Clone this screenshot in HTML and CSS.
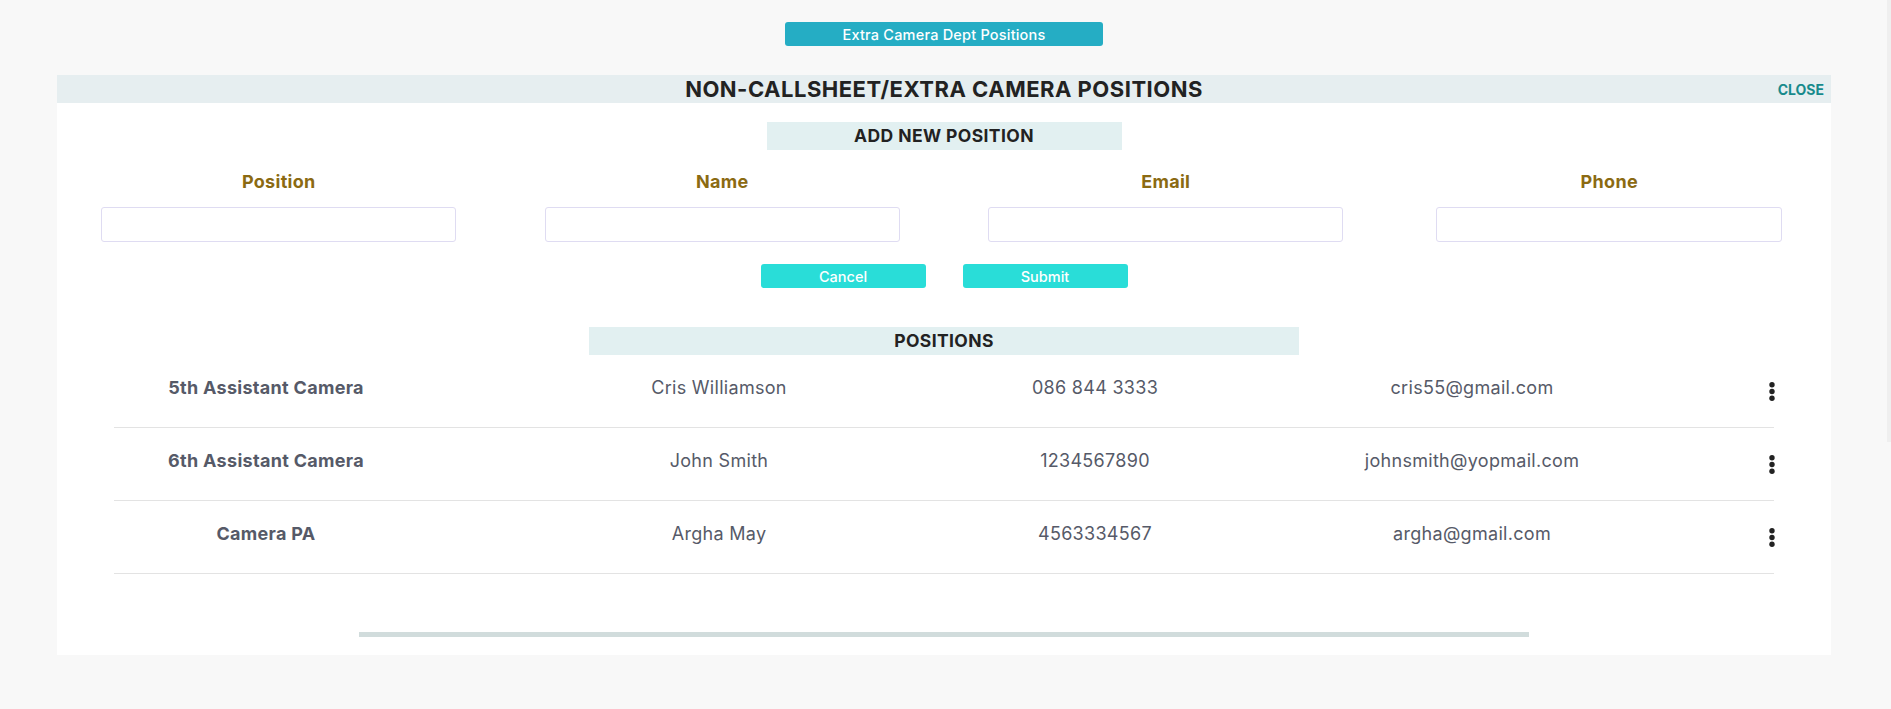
FILE: index.html
```html
<!DOCTYPE html>
<html lang="en">
<head>
<meta charset="utf-8">
<title>Extra Camera Positions</title>
<link rel="stylesheet" href="styles.css">
</head>
<body>
<div class="page">
  <div class="topbar">
    <button class="dept-btn" type="button">Extra Camera Dept Positions</button>
  </div>

  <section class="modal">
    <header class="modal-head">
      <span></span>
      <h1 class="modal-title">NON-CALLSHEET/EXTRA CAMERA POSITIONS</h1>
      <a class="close-link" href="#">CLOSE</a>
    </header>

    <div class="section-title add-title">ADD NEW POSITION</div>

    <form class="form-grid">
      <div class="field">
        <label class="field-label">Position</label>
        <input class="field-input" type="text">
      </div>
      <div class="field">
        <label class="field-label">Name</label>
        <input class="field-input" type="text">
      </div>
      <div class="field">
        <label class="field-label">Email</label>
        <input class="field-input" type="text">
      </div>
      <div class="field">
        <label class="field-label">Phone</label>
        <input class="field-input field-input-last" type="text">
      </div>
    </form>

    <div class="actions">
      <button class="action-btn" type="button">Cancel</button>
      <button class="action-btn" type="button">Submit</button>
    </div>

    <div class="section-title list-title">POSITIONS</div>

    <div class="table">
      <div class="row">
        <div class="cell cell-pos">5th Assistant Camera</div>
        <div class="cell">Cris Williamson</div>
        <div class="cell">086 844 3333</div>
        <div class="cell">cris55@gmail.com</div>
        <div class="cell-menu">
          <svg class="kebab" width="6" height="19" viewBox="0 0 6 19"><circle cx="3" cy="2.8" r="2.7"/><circle cx="3" cy="9.5" r="2.7"/><circle cx="3" cy="16.2" r="2.7"/></svg>
        </div>
      </div>
      <div class="row">
        <div class="cell cell-pos">6th Assistant Camera</div>
        <div class="cell">John Smith</div>
        <div class="cell">1234567890</div>
        <div class="cell">johnsmith@yopmail.com</div>
        <div class="cell-menu">
          <svg class="kebab" width="6" height="19" viewBox="0 0 6 19"><circle cx="3" cy="2.8" r="2.7"/><circle cx="3" cy="9.5" r="2.7"/><circle cx="3" cy="16.2" r="2.7"/></svg>
        </div>
      </div>
      <div class="row">
        <div class="cell cell-pos">Camera PA</div>
        <div class="cell">Argha May</div>
        <div class="cell">4563334567</div>
        <div class="cell">argha@gmail.com</div>
        <div class="cell-menu">
          <svg class="kebab" width="6" height="19" viewBox="0 0 6 19"><circle cx="3" cy="2.8" r="2.7"/><circle cx="3" cy="9.5" r="2.7"/><circle cx="3" cy="16.2" r="2.7"/></svg>
        </div>
      </div>
    </div>

    <div class="hscroll"><div class="hscroll-thumb"></div></div>
  </section>
</div>
<div class="vscroll"></div>
</body>
</html>
```

FILE: styles.css
```css
* { box-sizing: border-box; }

html, body {
  margin: 0;
  padding: 0;
}

body {
  background: #f8f8f8;
  font-family: Inter, "Noto Sans", "Liberation Sans", sans-serif;
  color: #222;
  overflow: hidden;
}

.page {
  width: 1774px;
  margin-left: 57px;
  padding-top: 22px;
}

.topbar {
  display: flex;
  justify-content: center;
}

.dept-btn {
  width: 318px;
  height: 24px;
  border: 0;
  border-radius: 3px;
  background: #25adc4;
  color: #fff;
  font-family: inherit;
  font-size: 14.5px;
  letter-spacing: 0.2px;
  font-weight: 500;
  padding: 0;
}

.modal {
  margin-top: 29px;
  background: #fff;
  padding-bottom: 18px;
}

.modal-head {
  display: grid;
  grid-template-columns: 1fr auto 1fr;
  align-items: center;
  height: 28px;
  background: #e6eef0;
}

.modal-title {
  margin: 0;
  font-size: 22px;
  letter-spacing: 0.5px;
  font-weight: 700;
  color: #222;
  line-height: 28px;
}

.close-link {
  justify-self: end;
  margin-right: 7px;
  font-size: 14px;
  font-weight: 700;
  color: #178a8c;
  text-decoration: none;
}

.section-title {
  margin-left: auto;
  margin-right: auto;
  height: 28px;
  line-height: 28px;
  background: #e2f0f1;
  text-align: center;
  font-size: 17.5px;
  letter-spacing: 0.4px;
  font-weight: 700;
  color: #222;
}

.add-title {
  width: 355px;
  margin-top: 19px;
}

.form-grid {
  display: grid;
  grid-template-columns: repeat(4, 1fr);
  margin: 22px 0 0;
}

.field {
  display: flex;
  flex-direction: column;
  align-items: center;
}

.field-label {
  font-size: 18px;
  letter-spacing: 0.3px;
  line-height: 20px;
  font-weight: 700;
  color: #8b6a12;
}

.field-input {
  margin-top: 15px;
  width: 80%;
  height: 35px;
  border: 1px solid #dfdcf2;
  border-radius: 3px;
  background: #fff;
  outline: none;
}

.field-input-last {
  width: 78%;
}

.actions {
  display: flex;
  justify-content: center;
  gap: 37px;
  margin-top: 22px;
}

.action-btn {
  width: 165px;
  height: 24px;
  border: 0;
  border-radius: 3px;
  background: #29ddd8;
  color: #fff;
  font-family: inherit;
  font-size: 14.5px;
  font-weight: 500;
  padding: 0;
}

.list-title {
  width: 710px;
  margin-top: 39px;
}

.table {
  margin: 0 57px;
}

.row {
  display: grid;
  grid-template-columns: 304px 602px 150px 604px 0;
  align-items: center;
  height: 73px;
  padding-bottom: 7px;
  border-bottom: 1px solid #e3e3e3;
}

.cell {
  text-align: center;
  font-size: 18px;
  letter-spacing: 0.3px;
  color: #565a68;
  white-space: nowrap;
}

.cell-pos {
  font-weight: 700;
}

.cell-menu {
  justify-self: start;
  width: 6px;
  margin-left: -5px;
  margin-top: 7px;
}

.kebab {
  display: block;
  flex-shrink: 0;
  fill: #222;
}

.hscroll {
  display: flex;
  justify-content: center;
  margin-top: 58px;
}

.hscroll-thumb {
  width: 1170px;
  height: 5px;
  background: #d1dcdc;
}

.vscroll {
  position: fixed;
  top: 0;
  right: 0;
  width: 4px;
  height: 442px;
  background: #efefef;
}
```
